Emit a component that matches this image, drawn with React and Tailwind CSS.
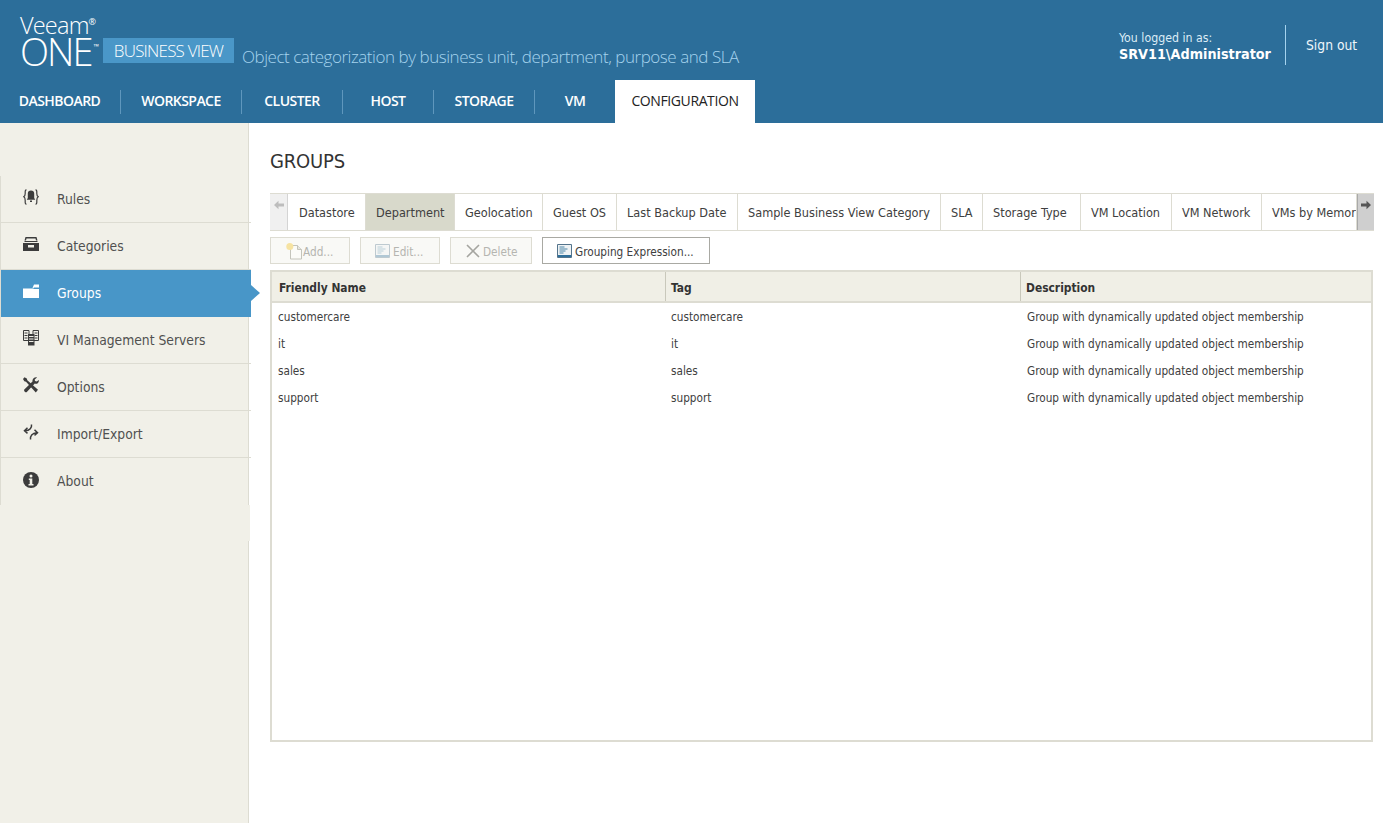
const F = "font-['DejaVu_Sans_Condensed','DejaVu_Sans',sans-serif]";

function RulesIcon() {
  return (
    <svg width="16" height="16" viewBox="0 0 16 16" fill="none">
      <path d="M3.500 .8C2 .8 2.200 2.500 2.200 4.500S2 7 .8 7.800C2 8.500 2.200 9.500 2.200 11.500s-.2 3.700 1.300 3.700M12.500 .8c1.500 0 1.300 1.700 1.300 3.700S14 7 15.200 7.800C14 8.500 13.800 9.500 13.800 11.500s.2 3.700-1.300 3.700" stroke="#3c3c3c" strokeWidth="1.200" />
      <path d="M8 1.500c2 0 3.200 1.200 3.200 3v4.500l1 1.800H3.800l1-1.800V4.500c0-1.800 1.200-3 3.200-3zM7 11.500h2v1.500H7z" fill="#3c3c3c" />
    </svg>
  );
}
function CategoriesIcon() {
  return (
    <svg width="16" height="16" viewBox="0 0 16 16">
      <path d="M2.500 1h11l1 3.500H13l-.5-2h-9l-.5 2H1.500z" fill="#3c3c3c" />
      <path d="M1.500 5h13v1h-13z" fill="#3c3c3c" />
      <path d="M0 7h16v8H0z" fill="#3c3c3c" />
      <path d="M5 9h6v2.500H5z" fill="#f1f0e8" />
    </svg>
  );
}
function FolderIcon() {
  return (
    <svg width="16" height="16" viewBox="0 0 16 16" fill="#fff">
      <path d="M0 5 L9.500 5 L11 1.500 H16 V4.500 H10.800 L10.500 5.500 H0Z" />
      <path d="M0 6h16v9H0z" />
    </svg>
  );
}
function ServersIcon() {
  return (
    <svg width="16" height="16" viewBox="0 0 16 16" fill="none" stroke="#3c3c3c">
      <path d="M.5 .5h5.500v10H.5zM10 .5h5.500v10H10z" />
      <path d="M1.500 3h3M1.500 5.500h3M1.500 8h3M11.500 3h3M11.500 5.500h3M11.500 8h3" />
      <path d="M5 4h6.500v11.500H5z" fill="#3c3c3c" stroke="none" />
      <path d="M6 6.500h4.500M6 9h4.500M6 11.500h4.500" stroke="#f1f0e8" />
    </svg>
  );
}
function ToolsIcon() {
  return (
    <svg width="16" height="16" viewBox="0 0 16 16" fill="#3c3c3c">
      <path d="M1.500 .3 3.800 1.500 4.300 3.300 15 12.800 12.800 15.500 3 4.800 1.300 4.300 0 2z" />
      <path d="M15.800 3c.5 2.300-1.700 4.500-4 3.600L3.800 15c-1 1-3.500-1.200-2.500-2.500l8.200-8.100C9 2 11.500-.2 14 .4l-2.300 2 .3 1.700 1.700.4z" />
    </svg>
  );
}
function ImportIcon() {
  return (
    <svg width="16" height="16" viewBox="0 0 16 16" fill="none" stroke="#3c3c3c" strokeWidth="1.500">
      <path d="M8.500 .5C9 3.500 7 6.500 2 6.800M4.500 3.800 1.500 6.800l3 2.500" />
      <path d="M7.500 15.500C7 12 9 9 14 8.800M11.500 5.800l3 3-3 2.500" />
    </svg>
  );
}
function InfoIcon() {
  return (
    <svg width="16" height="16" viewBox="0 0 16 16">
      <circle cx="8" cy="8" r="8" fill="#3c3c3c" />
      <circle cx="8" cy="4" r="1.500" fill="#f1f0e8" />
      <path d="M5.800 6.500h3.500v5.500h1.200v1.500h-5V12h1.200V8H5.800z" fill="#f1f0e8" />
    </svg>
  );
}
function DocIcon({ faded }) {
  return (
    <svg width="15" height="14" viewBox="0 0 15 14" className={faded ? "opacity-35" : ""}>
      <path d="M.5 .5h14v13H.5z" fill="#eef2f4" stroke="#54748c" />
      <path d="M2.500 3h5M2.500 5h8M2.500 7h6M2.500 9h4" stroke="#4d86a8" />
      <path d="M1 11h13v2H1z" fill="#2f6f9a" />
    </svg>
  );
}
function AddIcon() {
  return (
    <svg width="18" height="18" viewBox="0 0 18 18">
      <path d="M5.500 3.500h7l4 4v9.500h-11z" fill="#fbfbf8" stroke="#c4c4bb" />
      <path d="M12.500 3.500v4h4" fill="#e6e6df" stroke="#c4c4bb" />
      <circle cx="4.800" cy="4.500" r="3.500" fill="#f6e3a2" />
    </svg>
  );
}
function DeleteIcon() {
  return (
    <svg width="14" height="14" viewBox="0 0 14 14">
      <path d="M1 1l12 12M13 1 1 13" stroke="#a5a5a0" strokeWidth="1.600" />
    </svg>
  );
}
function Arrow({ color, flip }) {
  return (
    <svg width="10" height="10" viewBox="0 0 10 10" fill={color} className={flip ? "-scale-x-100" : ""}>
      <path d="M0 5 4.500 .8V3.500H10v3H4.500v2.700z" />
    </svg>
  );
}

const side = [
  ["Rules", <RulesIcon />],
  ["Categories", <CategoriesIcon />],
  ["Groups", <FolderIcon />, true],
  ["VI Management Servers", <ServersIcon />],
  ["Options", <ToolsIcon />],
  ["Import/Export", <ImportIcon />],
  ["About", <InfoIcon />],
];
const nav = [
  ["DASHBOARD", "w-[121px]"],
  ["WORKSPACE", "w-[121px]"],
  ["CLUSTER", "w-[101px]"],
  ["HOST", "w-[91px]"],
  ["STORAGE", "w-[101px]"],
  ["VM", "w-[80px]"],
];
const tabs = [
  ["Datastore", "w-[77px]"],
  ["Department", "w-[89px]", true],
  ["Geolocation", "w-[88px]"],
  ["Guest OS", "w-[74px]"],
  ["Last Backup Date", "w-[121px]"],
  ["Sample Business View Category", "w-[203px]"],
  ["SLA", "w-[42px]"],
  ["Storage Type", "w-[98px]"],
  ["VM Location", "w-[91px]"],
  ["VM Network", "w-[90px]"],
  ["VMs by Memory", "w-[95px]"],
];
const rows = ["customercare", "it", "sales", "support"];

export default function App() {
  return (
    <div className={`${F} h-[823px] w-[1383px] overflow-hidden bg-white flex flex-col`}>
      <header className="h-[123px] bg-[#2c6e9a] flex flex-col shrink-0">
        <div className="h-[80px] flex font-['Open_Sans',sans-serif]">
          <div className="w-[103px] pl-[20px] pt-[13px] text-white font-light">
            <div className="text-[23.500px] leading-[24px] tracking-[-0.8px]">Veeam<sup className="text-[9px] font-normal -top-[9px] tracking-normal">®</sup></div>
            <div className="text-[38px] leading-[30px] tracking-[-2px] mt-[-1px]">ONE<sup className="text-[7px] font-normal tracking-normal -top-[17px] left-[2px]">™</sup></div>
          </div>
          <div className="mt-[38px] w-[131px] h-[25px] bg-[#4a97c8] text-white text-[17px] font-light leading-[25px] text-center tracking-[-0.8px]">BUSINESS VIEW</div>
          <div className="ml-[8px] mt-[44px] text-[#a5d3ee] text-[17px] font-light leading-[25px] tracking-[-0.46px] whitespace-nowrap">Object categorization by business unit, department, purpose and SLA</div>
          <div className={`${F} ml-auto flex items-center h-[40px] mt-[25px] text-white`}>
            <div className="w-[166px] text-[12.250px] leading-[15px] pt-[3px]">
              <div className="text-[#dcecf6]">You logged in as:</div>
              <div className="font-bold text-[14.250px] leading-[17px]">SRV11\Administrator</div>
            </div>
            <div className="w-px h-[40px] bg-[#a5d3ee]" />
            <div className="w-[97px] pl-[20px] text-[13.750px] text-[#eef6fb]">Sign out</div>
          </div>
        </div>
        <nav className="h-[43px] flex text-[14px] font-['Open_Sans',sans-serif]">
          {nav.map(([t, w], i) => (
            <div key={t} className={`${w} h-full flex items-center justify-center text-white font-semibold tracking-[-0.55px]`}>
              <div className={`w-full h-[24px] leading-[21px] text-center ${i < 5 ? "border-r border-[#5f97bd]" : ""} ${i === 0 ? "pr-[1px]" : ""}`}>{t}</div>
            </div>
          ))}
          <div className="w-[140px] h-full bg-white text-[#222] flex items-center justify-center pb-[3px] tracking-[-0.4px]">CONFIGURATION</div>
        </nav>
      </header>

      <div className="flex-1 flex min-h-0">
        <aside className="w-[249px] bg-[#f1f0e8] border-r border-[#dddcd2] pt-[53px] shrink-0 text-[13.750px] text-[#505050]">
          <div className="border-l border-[#dddcd2]">
            {side.map(([t, icon, active], i) => (
              <div key={t} className={`relative w-[250px] h-[47px] flex items-center pl-[22px] ${i === 6 ? "" : "border-b"} ${active ? "bg-[#4896c8] text-white border-[#4896c8]" : "border-[#dddcd2]"}`}>
                <span className="w-[34px] flex -mt-[4px]">{icon}</span>
                <span>{t}</span>
                {active && <span className="absolute left-[250px] top-[15px] border-y-[8px] border-l-[9px] border-y-transparent border-l-[#4896c8]" />}
              </div>
            ))}
          </div>
          <div className="w-[250px] h-[36px] bg-[#f1f0e8]" />
        </aside>

        <main className="flex-1 pl-[21px] pr-[9px] text-[11.700px] text-[#404040]">
          <h1 className="text-[20px] leading-[24px] text-[#333] pt-[26px] h-[70px] tracking-[-0.2px]">GROUPS</h1>

          <div className="h-[38px] flex border-y border-[#dddcd2] bg-white">
            <div className="w-[18px] bg-[#f0f0f0] border-r border-[#d4d4d4] flex justify-center pt-[6px]"><Arrow color="#bdbdbd" /></div>
            <div className="flex-1 flex overflow-hidden pl-px">
              {tabs.map(([t, w, on]) => (
                <div key={t} className={`${w} shrink-0 pl-[10px] pt-[3px] whitespace-nowrap overflow-hidden flex items-center text-[12.600px] border-r border-[#dddcd2] ${on ? "bg-[#d8d9cb]" : ""}`}>{t}</div>
              ))}
            </div>
            <div className="w-[17px] bg-[#cfcfcf] border-l border-[#a9a9a9] flex justify-center pt-[6px]"><Arrow color="#555" flip /></div>
          </div>

          <div className="flex mt-[6px] gap-[10px] h-[27px] text-[11.700px]">
            <div className="w-[80px] border border-[#dddcd2] bg-[#f9f9f6] text-[#b5b5b0] flex items-center pl-[14px]"><AddIcon /><span className="pt-[4px]">Add...</span></div>
            <div className="w-[80px] border border-[#dddcd2] bg-[#f9f9f6] text-[#b5b5b0] flex items-center pl-[14px] gap-[3px]"><DocIcon faded /><span className="pt-[4px]">Edit...</span></div>
            <div className="w-[82px] border border-[#dddcd2] bg-[#f9f9f6] text-[#b5b5b0] flex items-center pl-[15px] gap-[3px]"><DeleteIcon /><span className="pt-[4px]">Delete</span></div>
            <div className="w-[168px] border border-[#a9a9a3] bg-white text-[#404040] flex items-center pl-[14px] gap-[3px]"><DocIcon /><span className="pt-[4px]">Grouping Expression...</span></div>
          </div>

          <div className="mt-[6px] h-[472px] border-2 border-[#dddcd2] w-[1103px]">
            <div className="h-[31px] flex bg-[#f0efe6] border-b-2 border-[#dddcd2] font-bold text-[11.900px] text-[#333] items-center">
              <div className="w-[394px] h-full flex items-center pl-[7px] pt-[4px] border-r border-[#c9c8bb]">Friendly Name</div>
              <div className="w-[355px] h-full flex items-center pl-[5px] pt-[4px] border-r border-[#c9c8bb]">Tag</div>
              <div className="flex-1 pl-[5px] pt-[4px]">Description</div>
            </div>
            <div className="pt-[1px]">
              {rows.map((r) => (
                <div key={r} className="flex h-[27px] items-center">
                  <div className="w-[393px] pl-[6px]">{r}</div>
                  <div className="w-[356px] pl-[6px]">{r}</div>
                  <div className="pl-[6px]">Group with dynamically updated object membership</div>
                </div>
              ))}
            </div>
          </div>
        </main>
      </div>
    </div>
  );
}
